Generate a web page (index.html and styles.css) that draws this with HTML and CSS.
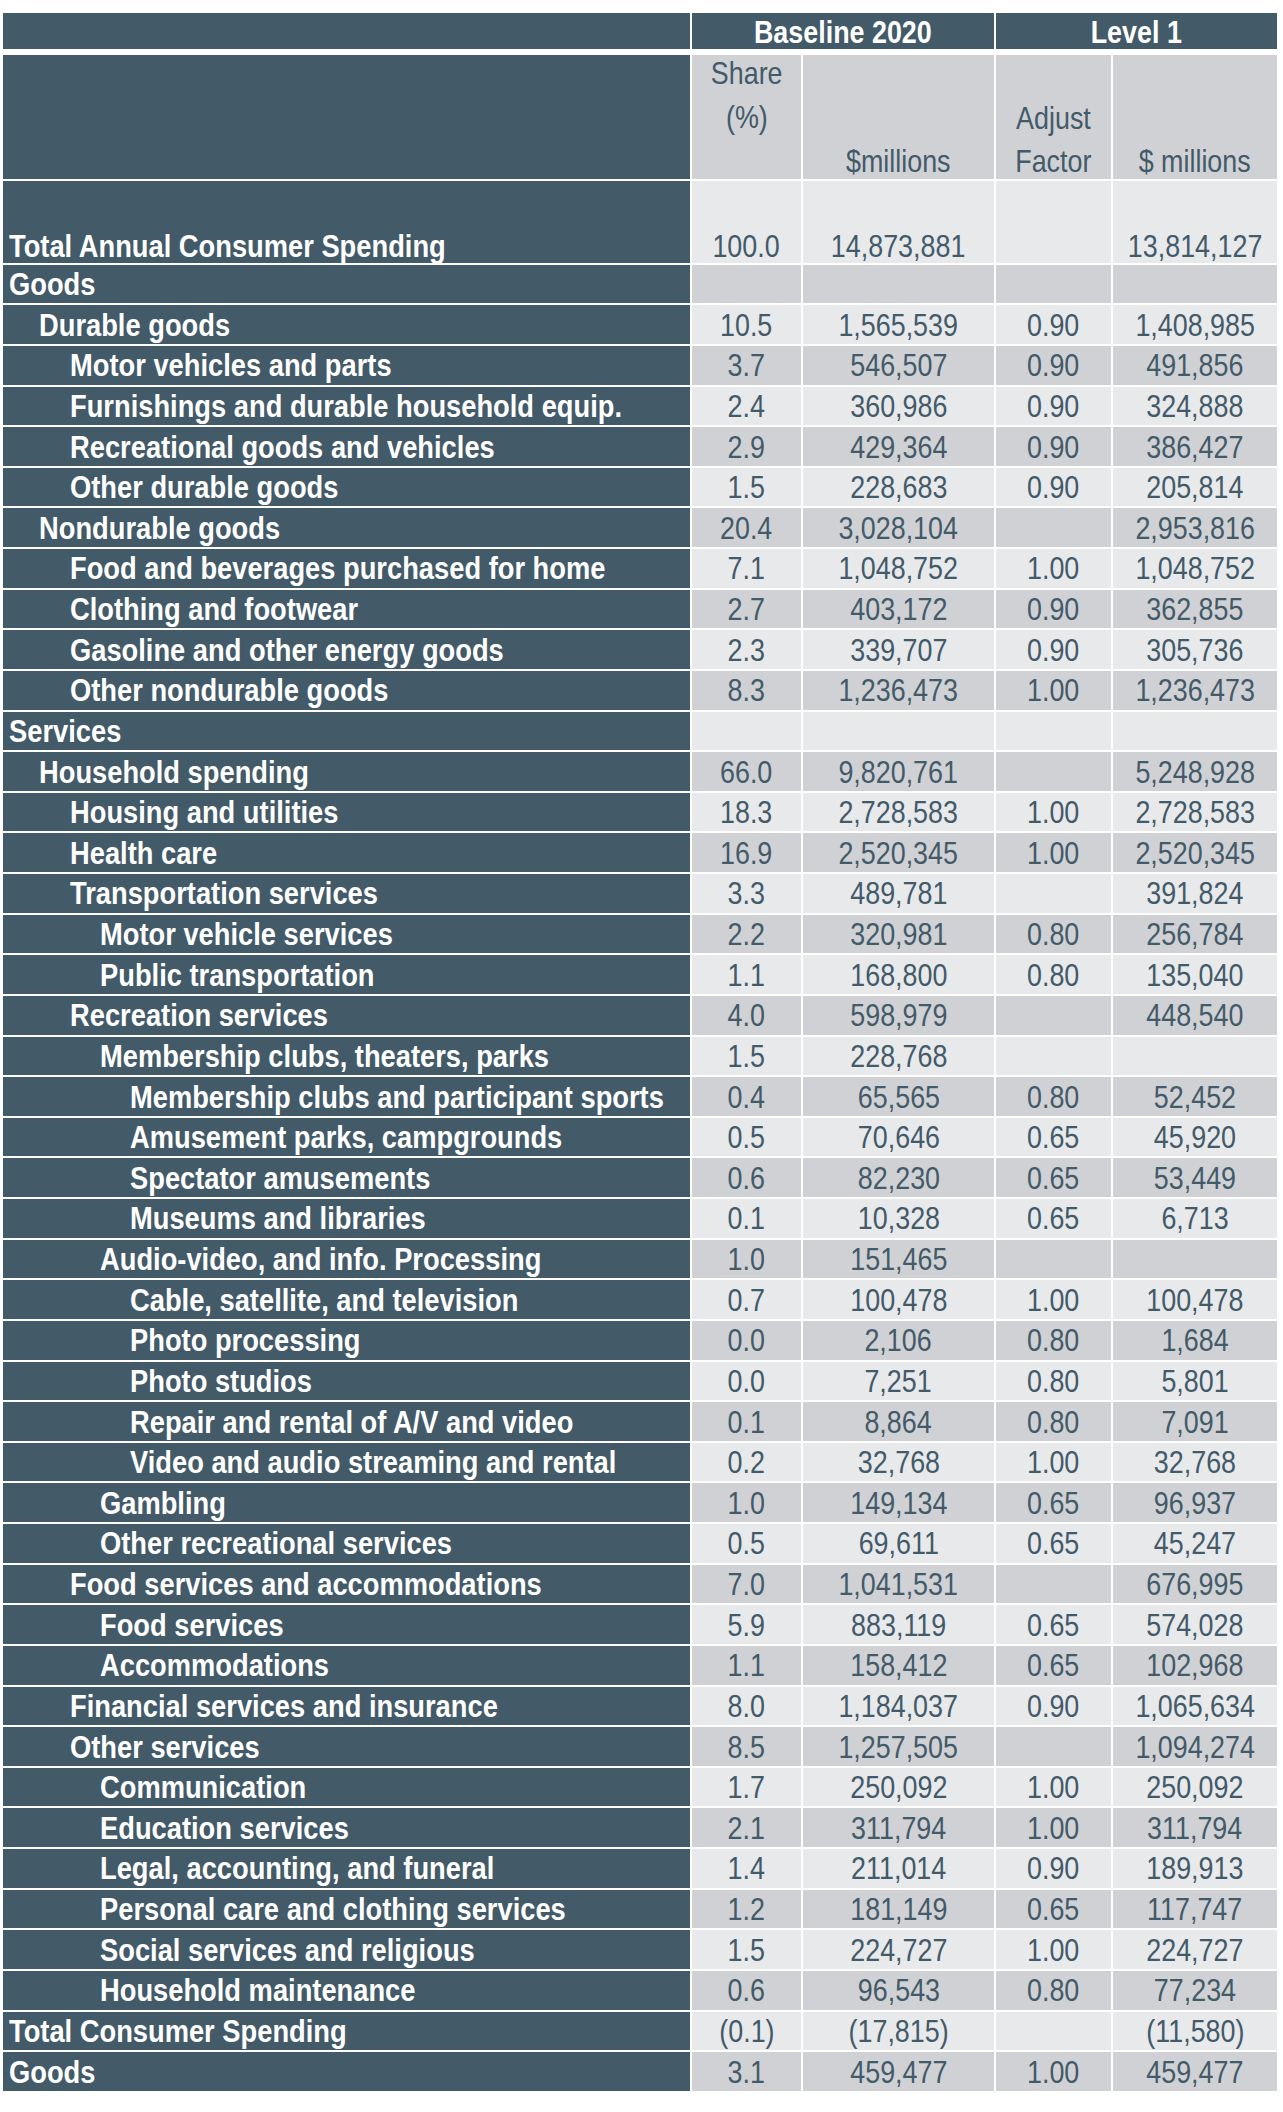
FILE: index.html
```html
<!DOCTYPE html>
<html lang="en">
<head>
<meta charset="utf-8">
<title>Consumer Spending</title>
<link rel="stylesheet" href="styles.css">
</head>
<body>
<table class="sheet">
  <colgroup>
    <col class="c-label"><col class="c-share"><col class="c-mil"><col class="c-adj"><col class="c-lvl">
  </colgroup>
  <thead>
    <tr class="h1">
      <th class="lab"></th>
      <th colspan="2"><span class="n">Baseline 2020</span></th>
      <th colspan="2"><span class="n">Level 1</span></th>
    </tr>
    <tr class="h2">
      <th class="lab"></th>
      <th class="top"><div class="ht"><span class="n">Share</span><br><span class="n">(%)</span></div></th>
      <th class="bot"><div class="hb"><span class="n">$millions</span></div></th>
      <th class="bot"><div class="hb"><span class="n">Adjust</span><br><span class="n">Factor</span></div></th>
      <th class="bot"><div class="hb"><span class="n">$ millions</span></div></th>
    </tr>
  </thead>
  <tbody>
    <tr class="total"><td class="lab l0"><span class="t">Total Annual Consumer Spending</span></td><td><span class="n">100.0</span></td><td><span class="n">14,873,881</span></td><td></td><td><span class="n">13,814,127</span></td></tr>
    <tr><td class="lab l0"><span class="t">Goods</span></td><td></td><td></td><td></td><td></td></tr>
    <tr><td class="lab l1"><span class="t">Durable goods</span></td><td><span class="n">10.5</span></td><td><span class="n">1,565,539</span></td><td><span class="n">0.90</span></td><td><span class="n">1,408,985</span></td></tr>
    <tr><td class="lab l2"><span class="t">Motor vehicles and parts</span></td><td><span class="n">3.7</span></td><td><span class="n">546,507</span></td><td><span class="n">0.90</span></td><td><span class="n">491,856</span></td></tr>
    <tr><td class="lab l2"><span class="t">Furnishings and durable household equip.</span></td><td><span class="n">2.4</span></td><td><span class="n">360,986</span></td><td><span class="n">0.90</span></td><td><span class="n">324,888</span></td></tr>
    <tr><td class="lab l2"><span class="t">Recreational goods and vehicles</span></td><td><span class="n">2.9</span></td><td><span class="n">429,364</span></td><td><span class="n">0.90</span></td><td><span class="n">386,427</span></td></tr>
    <tr><td class="lab l2"><span class="t">Other durable goods</span></td><td><span class="n">1.5</span></td><td><span class="n">228,683</span></td><td><span class="n">0.90</span></td><td><span class="n">205,814</span></td></tr>
    <tr><td class="lab l1"><span class="t">Nondurable goods</span></td><td><span class="n">20.4</span></td><td><span class="n">3,028,104</span></td><td></td><td><span class="n">2,953,816</span></td></tr>
    <tr><td class="lab l2"><span class="t">Food and beverages purchased for home</span></td><td><span class="n">7.1</span></td><td><span class="n">1,048,752</span></td><td><span class="n">1.00</span></td><td><span class="n">1,048,752</span></td></tr>
    <tr><td class="lab l2"><span class="t">Clothing and footwear</span></td><td><span class="n">2.7</span></td><td><span class="n">403,172</span></td><td><span class="n">0.90</span></td><td><span class="n">362,855</span></td></tr>
    <tr><td class="lab l2"><span class="t">Gasoline and other energy goods</span></td><td><span class="n">2.3</span></td><td><span class="n">339,707</span></td><td><span class="n">0.90</span></td><td><span class="n">305,736</span></td></tr>
    <tr><td class="lab l2"><span class="t">Other nondurable goods</span></td><td><span class="n">8.3</span></td><td><span class="n">1,236,473</span></td><td><span class="n">1.00</span></td><td><span class="n">1,236,473</span></td></tr>
    <tr><td class="lab l0"><span class="t">Services</span></td><td></td><td></td><td></td><td></td></tr>
    <tr><td class="lab l1"><span class="t">Household spending</span></td><td><span class="n">66.0</span></td><td><span class="n">9,820,761</span></td><td></td><td><span class="n">5,248,928</span></td></tr>
    <tr><td class="lab l2"><span class="t">Housing and utilities</span></td><td><span class="n">18.3</span></td><td><span class="n">2,728,583</span></td><td><span class="n">1.00</span></td><td><span class="n">2,728,583</span></td></tr>
    <tr><td class="lab l2"><span class="t">Health care</span></td><td><span class="n">16.9</span></td><td><span class="n">2,520,345</span></td><td><span class="n">1.00</span></td><td><span class="n">2,520,345</span></td></tr>
    <tr><td class="lab l2"><span class="t">Transportation services</span></td><td><span class="n">3.3</span></td><td><span class="n">489,781</span></td><td></td><td><span class="n">391,824</span></td></tr>
    <tr><td class="lab l3"><span class="t">Motor vehicle services</span></td><td><span class="n">2.2</span></td><td><span class="n">320,981</span></td><td><span class="n">0.80</span></td><td><span class="n">256,784</span></td></tr>
    <tr><td class="lab l3"><span class="t">Public transportation</span></td><td><span class="n">1.1</span></td><td><span class="n">168,800</span></td><td><span class="n">0.80</span></td><td><span class="n">135,040</span></td></tr>
    <tr><td class="lab l2"><span class="t">Recreation services</span></td><td><span class="n">4.0</span></td><td><span class="n">598,979</span></td><td></td><td><span class="n">448,540</span></td></tr>
    <tr><td class="lab l3"><span class="t">Membership clubs, theaters, parks</span></td><td><span class="n">1.5</span></td><td><span class="n">228,768</span></td><td></td><td></td></tr>
    <tr><td class="lab l4"><span class="t">Membership clubs and participant sports</span></td><td><span class="n">0.4</span></td><td><span class="n">65,565</span></td><td><span class="n">0.80</span></td><td><span class="n">52,452</span></td></tr>
    <tr><td class="lab l4"><span class="t">Amusement parks, campgrounds</span></td><td><span class="n">0.5</span></td><td><span class="n">70,646</span></td><td><span class="n">0.65</span></td><td><span class="n">45,920</span></td></tr>
    <tr><td class="lab l4"><span class="t">Spectator amusements</span></td><td><span class="n">0.6</span></td><td><span class="n">82,230</span></td><td><span class="n">0.65</span></td><td><span class="n">53,449</span></td></tr>
    <tr><td class="lab l4"><span class="t">Museums and libraries</span></td><td><span class="n">0.1</span></td><td><span class="n">10,328</span></td><td><span class="n">0.65</span></td><td><span class="n">6,713</span></td></tr>
    <tr><td class="lab l3"><span class="t">Audio-video, and info. Processing</span></td><td><span class="n">1.0</span></td><td><span class="n">151,465</span></td><td></td><td></td></tr>
    <tr><td class="lab l4"><span class="t">Cable, satellite, and television</span></td><td><span class="n">0.7</span></td><td><span class="n">100,478</span></td><td><span class="n">1.00</span></td><td><span class="n">100,478</span></td></tr>
    <tr><td class="lab l4"><span class="t">Photo processing</span></td><td><span class="n">0.0</span></td><td><span class="n">2,106</span></td><td><span class="n">0.80</span></td><td><span class="n">1,684</span></td></tr>
    <tr><td class="lab l4"><span class="t">Photo studios</span></td><td><span class="n">0.0</span></td><td><span class="n">7,251</span></td><td><span class="n">0.80</span></td><td><span class="n">5,801</span></td></tr>
    <tr><td class="lab l4"><span class="t">Repair and rental of A/V and video</span></td><td><span class="n">0.1</span></td><td><span class="n">8,864</span></td><td><span class="n">0.80</span></td><td><span class="n">7,091</span></td></tr>
    <tr><td class="lab l4"><span class="t">Video and audio streaming and rental</span></td><td><span class="n">0.2</span></td><td><span class="n">32,768</span></td><td><span class="n">1.00</span></td><td><span class="n">32,768</span></td></tr>
    <tr><td class="lab l3"><span class="t">Gambling</span></td><td><span class="n">1.0</span></td><td><span class="n">149,134</span></td><td><span class="n">0.65</span></td><td><span class="n">96,937</span></td></tr>
    <tr><td class="lab l3"><span class="t">Other recreational services</span></td><td><span class="n">0.5</span></td><td><span class="n">69,611</span></td><td><span class="n">0.65</span></td><td><span class="n">45,247</span></td></tr>
    <tr><td class="lab l2"><span class="t">Food services and accommodations</span></td><td><span class="n">7.0</span></td><td><span class="n">1,041,531</span></td><td></td><td><span class="n">676,995</span></td></tr>
    <tr><td class="lab l3"><span class="t">Food services</span></td><td><span class="n">5.9</span></td><td><span class="n">883,119</span></td><td><span class="n">0.65</span></td><td><span class="n">574,028</span></td></tr>
    <tr><td class="lab l3"><span class="t">Accommodations</span></td><td><span class="n">1.1</span></td><td><span class="n">158,412</span></td><td><span class="n">0.65</span></td><td><span class="n">102,968</span></td></tr>
    <tr><td class="lab l2"><span class="t">Financial services and insurance</span></td><td><span class="n">8.0</span></td><td><span class="n">1,184,037</span></td><td><span class="n">0.90</span></td><td><span class="n">1,065,634</span></td></tr>
    <tr><td class="lab l2"><span class="t">Other services</span></td><td><span class="n">8.5</span></td><td><span class="n">1,257,505</span></td><td></td><td><span class="n">1,094,274</span></td></tr>
    <tr><td class="lab l3"><span class="t">Communication</span></td><td><span class="n">1.7</span></td><td><span class="n">250,092</span></td><td><span class="n">1.00</span></td><td><span class="n">250,092</span></td></tr>
    <tr><td class="lab l3"><span class="t">Education services</span></td><td><span class="n">2.1</span></td><td><span class="n">311,794</span></td><td><span class="n">1.00</span></td><td><span class="n">311,794</span></td></tr>
    <tr><td class="lab l3"><span class="t">Legal, accounting, and funeral</span></td><td><span class="n">1.4</span></td><td><span class="n">211,014</span></td><td><span class="n">0.90</span></td><td><span class="n">189,913</span></td></tr>
    <tr><td class="lab l3"><span class="t">Personal care and clothing services</span></td><td><span class="n">1.2</span></td><td><span class="n">181,149</span></td><td><span class="n">0.65</span></td><td><span class="n">117,747</span></td></tr>
    <tr><td class="lab l3"><span class="t">Social services and religious</span></td><td><span class="n">1.5</span></td><td><span class="n">224,727</span></td><td><span class="n">1.00</span></td><td><span class="n">224,727</span></td></tr>
    <tr><td class="lab l3"><span class="t">Household maintenance</span></td><td><span class="n">0.6</span></td><td><span class="n">96,543</span></td><td><span class="n">0.80</span></td><td><span class="n">77,234</span></td></tr>
    <tr><td class="lab l0"><span class="t">Total Consumer Spending</span></td><td><span class="n">(0.1)</span></td><td><span class="n">(17,815)</span></td><td></td><td><span class="n">(11,580)</span></td></tr>
    <tr><td class="lab l0"><span class="t">Goods</span></td><td><span class="n">3.1</span></td><td><span class="n">459,477</span></td><td><span class="n">1.00</span></td><td><span class="n">459,477</span></td></tr>
  </tbody>
</table>
</body>
</html>
```

FILE: styles.css
```css
html, body {
  margin: 0;
  padding: 0;
  background: #ffffff;
}

body {
  padding: 10.5px 0 0 1px;
}

.sheet {
  border-collapse: separate;
  border-spacing: 2px;
  table-layout: fixed;
  width: 1278px;
  font-family: "Liberation Sans", Arial, sans-serif;
  font-size: 32px;
  color: #435a69;
}

.c-label { width: 687px; }
.c-share { width: 109px; }
.c-mil { width: 191px; }
.c-adj { width: 115px; }
.c-lvl { width: 164px; }

.sheet th,
.sheet td {
  padding: 0;
  box-sizing: border-box;
  text-align: center;
  white-space: nowrap;
}

/* narrow glyphs: Arial scaled like Arial Narrow */
.n,
.t {
  display: inline-block;
}

.n {
  transform: scaleX(0.84);
  transform-origin: 50% 50%;
}

.t {
  transform: scaleX(0.853);
  transform-origin: 0 50%;
  max-width: 100%;
  margin-right: -200px;
}

.sheet td {
  height: 38.64px;
  line-height: 38px;
  vertical-align: middle;
  background: #e8e9eb;
}

.sheet tbody tr:nth-child(even) td {
  background: #d0d1d4;
}

.sheet .lab,
.sheet tbody tr:nth-child(even) td.lab {
  background: #435a69;
  color: #ffffff;
  font-weight: bold;
  text-align: left;
}

.sheet td.l0 { padding-left: 6px; }
.sheet td.l1 { padding-left: 36px; }
.sheet td.l2 { padding-left: 67px; }
.sheet td.l3 { padding-left: 97px; }
.sheet td.l4 { padding-left: 127px; }

/* header row 1 */
.h1 th {
  height: 40.5px;
  padding-top: 3px;
  background: #435a69;
  color: #ffffff;
  font-weight: bold;
  line-height: 33px;
  vertical-align: top;
  border-bottom: 4.5px solid #ffffff;
}

/* header row 2 */
.h2 th {
  height: 124px;
  background: #d0d1d4;
  font-weight: normal;
  line-height: 44px;
}

.h2 th.lab {
  background: #435a69;
}

.h2 th.top {
  vertical-align: top;
}

.ht {
  margin-top: -4px;
}

.h2 th.bot {
  vertical-align: bottom;
  line-height: 43px;
}

.hb {
  margin-bottom: -4px;
}

/* total annual row */
.sheet tr.total td {
  height: 81.7px;
  vertical-align: bottom;
  line-height: 34px;
}
```
